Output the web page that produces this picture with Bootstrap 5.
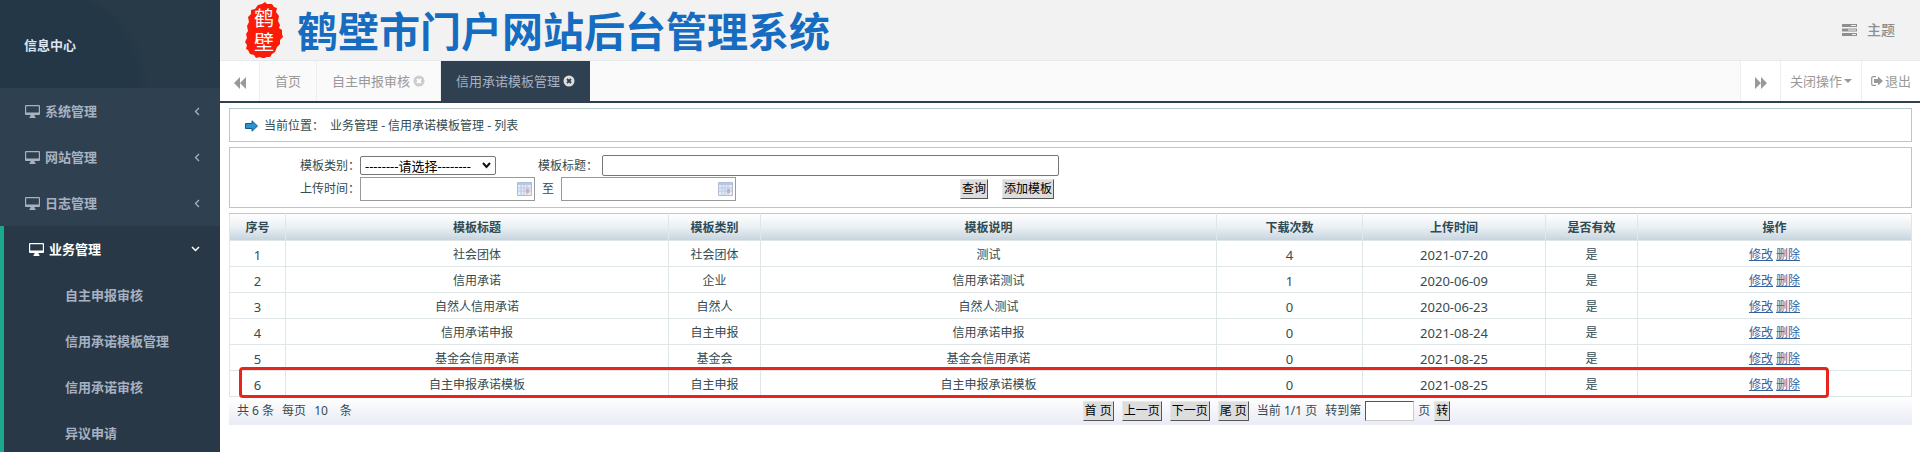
<!DOCTYPE html>
<html lang="zh-CN">
<head>
<meta charset="utf-8">
<meta name="viewport" content="width=device-width, initial-scale=1">
<title>鹤壁市门户网站后台管理系统</title>
<link href="https://cdn.jsdelivr.net/npm/bootstrap@5.3.0/dist/css/bootstrap.min.css" rel="stylesheet">
<style>
body{font-family:"Noto Sans","Noto Sans CJK SC",sans-serif;font-size:12px;line-height:18px;color:#344b50;background:#fff}
.side{width:220px;background:#2f4050;font-size:13px;font-weight:700}
.side-head{height:88px;padding:2px 24px 0;color:#dfe4ed;background:radial-gradient(ellipse 150px 110px at 0 80px,#243746 90%,#283a48 100%)}
.side a{height:46px;color:#a7b1c2;text-decoration:none;padding:0 20px 0 25px;gap:5px}
.side .group-open{background:#293846;border-left:4px solid #19aa8d}
.side .group-open a.top-link{color:#fff}
.side .sub-link{padding-left:61px}
.brandbar{height:61px;background:#f2f2f2;border-bottom:1px solid #e7eaec;padding:0 25px 0 24px}
.brand-title{font-size:41px;line-height:60px;font-weight:700;color:#156cc0;margin:0;padding:2px 0 0 13px}
.theme{font-size:14px;font-weight:500;color:#8f8f8f;gap:10px;text-decoration:none}
.tabs{height:42px;background:#fafafa;border-bottom:2px solid #2f4050;font-size:13px}
.tabs a,.tabs button{border:0;border-right:1px solid #eee;color:#999;text-decoration:none;background:#fafafa;padding:0 15px;gap:3px}
.tabs .roll{width:40px;padding:0;background:#fff}
.tabs .right-cell{background:#fff;border-right:0;border-left:1px solid #eee;padding:0 9px;gap:2px}
.tabs .right-cell.roll{padding:0}
.tabs a.current{background:#2f4050;color:#a7b1c2;border-right:0}
.work{padding:5px 8px 0 9px}
.pane{border:1px solid #b5c9c9;margin-bottom:5px}
.crumb{height:34px;padding:2px 15px 0;gap:6px}
.search{height:61px;padding:7px 0 0 70px}
.search label{width:60px}
.search .ttl-label{width:64px;margin-left:42px}
.search input,.search select,.pager input{border:1px solid #767676;border-radius:0;background:#fff;color:#000;padding:0}
.search select{width:136px;height:19px;font-size:13px;line-height:16px;border-radius:2px;appearance:none;padding-left:4px}
.pick{width:136px}
.pick svg{position:absolute;right:5px;top:6px;pointer-events:none}
.search .title-in{width:457px;height:21px;border-radius:2px}
.date-row{padding-top:1px}
.search .date-in{width:175px;height:24px;border-color:#999}
.search .to-label{width:26px;text-align:center}
.datebox svg{position:absolute;right:3px;top:5px}
.acts{margin-left:224px;gap:14px}
.oldbtn{height:20px;border:1px solid;border-color:#e8e8e8 #555 #555 #e8e8e8;background:#ddd;color:#000;font-size:12px;line-height:16px;padding:0 1px;white-space:nowrap}
.grid{width:100%;table-layout:fixed;border-collapse:collapse;text-align:center}
.grid th,.grid td{border:1px solid #dfe6e8;height:26px;padding:2px 0 0}
.grid thead tr{background:linear-gradient(#fff,#e9eff3 50%,#c4d2dd)}
.grid th{height:27px;border-top:1px solid #bcc8cc;border-bottom:0;color:#2f4a52;font-weight:700}
.grid .num{font-size:13px}
.grid a{color:#36629b;text-decoration:underline}
.outline{position:absolute;left:10px;right:83px;bottom:-1px;height:31px;border:3px solid #e8251c;border-radius:4px;pointer-events:none}
.pager{height:28px;background:linear-gradient(#fff,#e9ebf5)}
.pager .half{width:50%}
.pager input{width:49px;height:20px;border-color:#555 #ccc #ccc #555}
</style>
</head>
<body>
<svg class="d-none" aria-hidden="true">
<symbol id="desk" viewBox="0 0 15 13"><path fill="currentColor" fill-rule="evenodd" d="M1 0h13a1 1 0 0 1 1 1v8a1 1 0 0 1-1 1H9.500v1l1 1v1h-6v-1l1-1v-1H1a1 1 0 0 1-1-1V1a1 1 0 0 1 1-1zM1.200 1.200v6.300h12.600V1.200z"/></symbol>
<symbol id="left" viewBox="0 0 6 9"><path d="M5 1L1.500 4.500 5 8" fill="none" stroke="currentColor" stroke-width="1.300"/></symbol>
<symbol id="down" viewBox="0 0 9 6"><path d="M1 1l3.500 3.500L8 1" fill="none" stroke="currentColor" stroke-width="1.500"/></symbol>
<symbol id="rew" viewBox="0 0 12 12"><path d="M6 0v12L0 6zM12 0v12L6 6z" fill="currentColor"/></symbol>
<symbol id="cal" viewBox="0 0 15 14"><path d="M.5.5h14v13H.500z" fill="#e4ecf7" stroke="#b3bcd2"/><path d="M1 1h13v2H1z" fill="#b9c6e6"/><path d="M1 6h13M1 9h13M4 3v10M7 3v10M10 3v10" stroke="#b4c8e6"/><path d="M9 7h3v4H9z" fill="#e5a59b"/></symbol>
</svg>
<div class="d-flex min-vh-100">
<nav class="side flex-shrink-0">
<div class="side-head d-flex align-items-center">信息中心</div>
<a href="#" class="d-flex align-items-center"><svg width="15" height="13"><use href="#desk"/></svg><span>系统管理</span><svg width="6" height="9" class="ms-auto"><use href="#left"/></svg></a>
<a href="#" class="d-flex align-items-center"><svg width="15" height="13"><use href="#desk"/></svg><span>网站管理</span><svg width="6" height="9" class="ms-auto"><use href="#left"/></svg></a>
<a href="#" class="d-flex align-items-center"><svg width="15" height="13"><use href="#desk"/></svg><span>日志管理</span><svg width="6" height="9" class="ms-auto"><use href="#left"/></svg></a>
<div class="group-open">
<a href="#" class="top-link d-flex align-items-center"><svg width="15" height="13"><use href="#desk"/></svg><span>业务管理</span><svg width="9" height="6" class="ms-auto"><use href="#down"/></svg></a>
<a href="#" class="sub-link d-flex align-items-center">自主申报审核</a>
<a href="#" class="sub-link d-flex align-items-center">信用承诺模板管理</a>
<a href="#" class="sub-link d-flex align-items-center">信用承诺审核</a>
<a href="#" class="sub-link d-flex align-items-center">异议申请</a>
</div>
</nav>
<div class="flex-grow-1">
<header class="brandbar d-flex align-items-center">
<svg width="40" height="56" viewBox="0 0 40 56" font-family="'Noto Sans CJK SC',sans-serif" fill="#fff" text-anchor="middle"><path fill="#fb1b08" d="M14 3l4-1 3-2 2 2 5 0 2 3 3 1-1 4 3 4-1 5 2 4-1 3 3 2 0 4 1 3-3 3 0 4-3 3-2 5-3 2-2 3-4 0-2 2-4-2-4 1-2-3-4-1-2-4-2-1 1-4-2-3 2-4-1-4 2-3-1-5 2-4-1-5 3-3 0-4 4-1z"/><text x="20" y="24" font-size="20">鹤</text><text x="20" y="48" font-size="20">壁</text></svg>
<h1 class="brand-title">鹤壁市门户网站后台管理系统</h1>
<a href="#" class="theme ms-auto d-flex align-items-center"><svg width="15" height="12" viewBox="0 0 15 12" fill="currentColor"><path fill-rule="evenodd" d="M0 0h15v3H0zM9 1v1h5V1zM0 4.500h15v3H0zM6 5.500v1h8v-1zM0 9h15v3H0zM10 10v1h4v-1z"/></svg>主题</a>
</header>
<div class="tabs d-flex align-items-stretch">
<button type="button" class="roll" aria-label="向左"><svg width="12" height="12"><use href="#rew"/></svg></button>
<a href="#" class="d-flex align-items-center">首页</a>
<a href="#" class="d-flex align-items-center">自主申报审核<svg width="12" height="12" viewBox="0 0 12 12"><circle cx="6" cy="6" r="5.500" fill="#ccc"/><path d="M4 4l4 4M8 4L4 8" stroke="#fff" stroke-width="1.800"/></svg></a>
<a href="#" class="current d-flex align-items-center">信用承诺模板管理<svg width="12" height="12" viewBox="0 0 12 12"><circle cx="6" cy="6" r="5.500" fill="#ddd"/><path d="M4 4l4 4M8 4L4 8" stroke="#2f4050" stroke-width="1.800"/></svg></a>
<button type="button" class="right-cell roll ms-auto" aria-label="向右"><svg width="12" height="12" viewBox="0 0 12 12"><path d="M0 0v12l6-6zM6 0v12l6-6z" fill="currentColor"/></svg></button>
<button type="button" class="right-cell d-flex align-items-center">关闭操作<svg width="8" height="4" viewBox="0 0 8 4"><path d="M0 0h8L4 4z" fill="currentColor"/></svg></button>
<a href="#" class="right-cell d-flex align-items-center"><svg width="12" height="10" viewBox="0 0 12 10"><path d="M5 .7H2A1.300 1.300 0 0 0 .7 2v6A1.300 1.300 0 0 0 2 9.300h3" fill="none" stroke="currentColor" stroke-width="1.200"/><path d="M7 .5L12 5 7 9.500V7H3V3h4z" fill="currentColor"/></svg><span>退出</span></a>
</div>
<main class="work">
<div class="pane crumb d-flex align-items-center"><svg width="13" height="12" viewBox="0 0 13 12"><path d="M.5 3.500H7V.8L12.500 6 7 11.200V8.500H.500z" fill="#2c93d0" stroke="#155a8c"/></svg><span>当前位置：</span><span>业务管理 - 信用承诺模板管理 - 列表</span></div>
<form class="pane search">
<div class="d-flex align-items-center">
<label for="kind">模板类别：</label><div class="pick position-relative d-flex"><select id="kind"><option>--------请选择--------</option></select><svg width="9" height="7" viewBox="0 0 9 7"><path d="M1 1l3.500 4L8 1" fill="none" stroke="#111" stroke-width="2"/></svg></div>
<label for="ttl" class="ttl-label">模板标题：</label><input id="ttl" type="text" class="title-in">
</div>
<div class="date-row d-flex align-items-center">
<label for="from">上传时间：</label><div class="datebox position-relative d-flex"><input id="from" type="text" class="date-in"><svg width="15" height="14"><use href="#cal"/></svg></div>
<label for="to" class="to-label">至</label><div class="datebox position-relative d-flex"><input id="to" type="text" class="date-in"><svg width="15" height="14"><use href="#cal"/></svg></div>
<div class="acts d-flex"><button type="button" class="oldbtn">查询</button><button type="button" class="oldbtn">添加模板</button></div>
</div>
</form>
<div class="position-relative">
<table class="grid">
<colgroup><col style="width:3.33%"><col style="width:22.77%"><col style="width:5.47%"><col style="width:27.11%"><col style="width:8.68%"><col style="width:10.88%"><col style="width:5.47%"><col style="width:16.29%"></colgroup>
<thead><tr><th>序号</th><th>模板标题</th><th>模板类别</th><th>模板说明</th><th>下载次数</th><th>上传时间</th><th>是否有效</th><th>操作</th></tr></thead>
<tbody>
<tr><td class="num">1</td><td>社会团体</td><td>社会团体</td><td>测试</td><td class="num">4</td><td class="num">2021-07-20</td><td>是</td><td><a href="#">修改</a> <a href="#">删除</a></td></tr>
<tr><td class="num">2</td><td>信用承诺</td><td>企业</td><td>信用承诺测试</td><td class="num">1</td><td class="num">2020-06-09</td><td>是</td><td><a href="#">修改</a> <a href="#">删除</a></td></tr>
<tr><td class="num">3</td><td>自然人信用承诺</td><td>自然人</td><td>自然人测试</td><td class="num">0</td><td class="num">2020-06-23</td><td>是</td><td><a href="#">修改</a> <a href="#">删除</a></td></tr>
<tr><td class="num">4</td><td>信用承诺申报</td><td>自主申报</td><td>信用承诺申报</td><td class="num">0</td><td class="num">2021-08-24</td><td>是</td><td><a href="#">修改</a> <a href="#">删除</a></td></tr>
<tr><td class="num">5</td><td>基金会信用承诺</td><td>基金会</td><td>基金会信用承诺</td><td class="num">0</td><td class="num">2021-08-25</td><td>是</td><td><a href="#">修改</a> <a href="#">删除</a></td></tr>
<tr><td class="num">6</td><td>自主申报承诺模板</td><td>自主申报</td><td>自主申报承诺模板</td><td class="num">0</td><td class="num">2021-08-25</td><td>是</td><td><a href="#">修改</a> <a href="#">删除</a></td></tr>
</tbody>
</table>
<div class="outline"></div>
</div>
<div class="pager d-flex align-items-center">
<div class="half d-flex gap-2 ps-2"><span>共 6 条</span><span>每页</span><span>10</span><span class="ms-1">条</span></div>
<div class="half d-flex align-items-center ps-2"><div class="d-flex gap-2 ms-1"><button type="button" class="oldbtn">首 页</button><button type="button" class="oldbtn">上一页</button><button type="button" class="oldbtn">下一页</button><button type="button" class="oldbtn">尾 页</button></div><span class="px-2">当前 1/1 页</span><label for="go" class="pe-1">转到第</label><input id="go" type="text"><span class="px-1">页</span><button type="button" class="oldbtn">转</button></div>
</div>
</main>
</div>
</div>
<script src="https://cdn.jsdelivr.net/npm/bootstrap@5.3.0/dist/js/bootstrap.bundle.min.js"></script>
</body>
</html>
